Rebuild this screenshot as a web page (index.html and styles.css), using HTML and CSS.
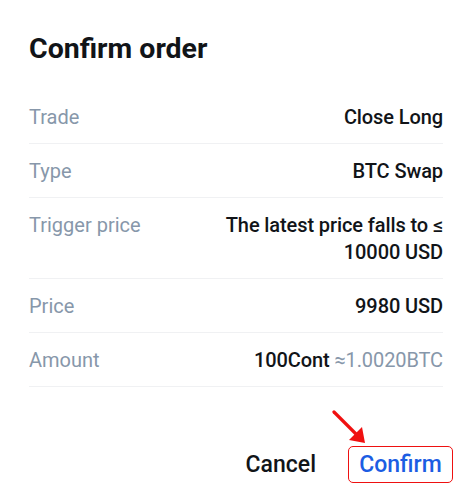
FILE: index.html
```html
<!DOCTYPE html>
<html>
<head>
<meta charset="utf-8">
<link rel="stylesheet" href="styles.css">
</head>
<body>
<div class="dialog">
  <h1 class="title">Confirm order</h1>
  <div class="rows">
    <div class="row"><span class="label">Trade</span><span class="value">Close Long</span></div>
    <div class="row"><span class="label">Type</span><span class="value">BTC Swap</span></div>
    <div class="row"><span class="label">Trigger price</span><span class="value">The latest price falls to ≤ 10000 USD</span></div>
    <div class="row"><span class="label">Price</span><span class="value">9980 USD</span></div>
    <div class="row"><span class="label">Amount</span><span class="value">100Cont <span class="muted">≈1.0020BTC</span></span></div>
  </div>
  <div class="actions">
    <button class="btn cancel">Cancel</button>
    <div class="confirm-wrap">
      <svg class="arrow" width="40" height="40" viewBox="0 0 40 40">
        <line x1="2" y1="2" x2="26" y2="26" stroke="#f01010" stroke-width="3.2" stroke-linecap="round"/>
        <polygon points="33,33 17,30 30,17" fill="#f01010"/>
      </svg>
      <button class="btn confirm">Confirm</button>
    </div>
  </div>
</div>
</body>
</html>
```
FILE: styles.css
```css
html, body {
  margin: 0;
  padding: 0;
  background: #ffffff;
}
body {
  font-family: Roboto, "Noto Sans", sans-serif;
  width: 472px;
  height: 501px;
  overflow: hidden;
}
.dialog {
  padding: 30px 29px 0 29px;
}
.title {
  margin: 0;
  font-size: 28.5px;
  line-height: 38px;
  font-weight: 700;
  color: #111418;
}
.rows {
  margin-top: 22px;
}
.row {
  display: flex;
  justify-content: space-between;
  align-items: flex-start;
  padding: 14px 0 12px 0;
  border-bottom: 1px solid #f0f1f3;
  font-size: 20px;
  line-height: 27px;
}
.label {
  color: #8797aa;
  font-weight: 400;
}
.value {
  color: #111418;
  font-weight: 500;
  text-align: right;
  max-width: 240px;
  letter-spacing: -0.1px;
}
.muted {
  color: #8797aa;
  font-weight: 400;
}
.actions {
  display: flex;
  justify-content: flex-end;
  align-items: center;
  gap: 32px;
  margin-top: 59px;
  margin-right: -10px;
}
.btn {
  font-family: Roboto, "Noto Sans", sans-serif;
  background: none;
  border: none;
  font-size: 23px;
  font-weight: 500;
  line-height: 28px;
  padding: 0;
  cursor: pointer;
}
.cancel {
  color: #111418;
}
.confirm-wrap {
  position: relative;
}
.confirm {
  color: #1b5de3;
  border: 1.5px solid #ee1111;
  border-radius: 5px;
  height: 37px;
  width: 105px;
  padding: 0;
}
.arrow {
  position: absolute;
  left: -16px;
  top: -36px;
}
```
